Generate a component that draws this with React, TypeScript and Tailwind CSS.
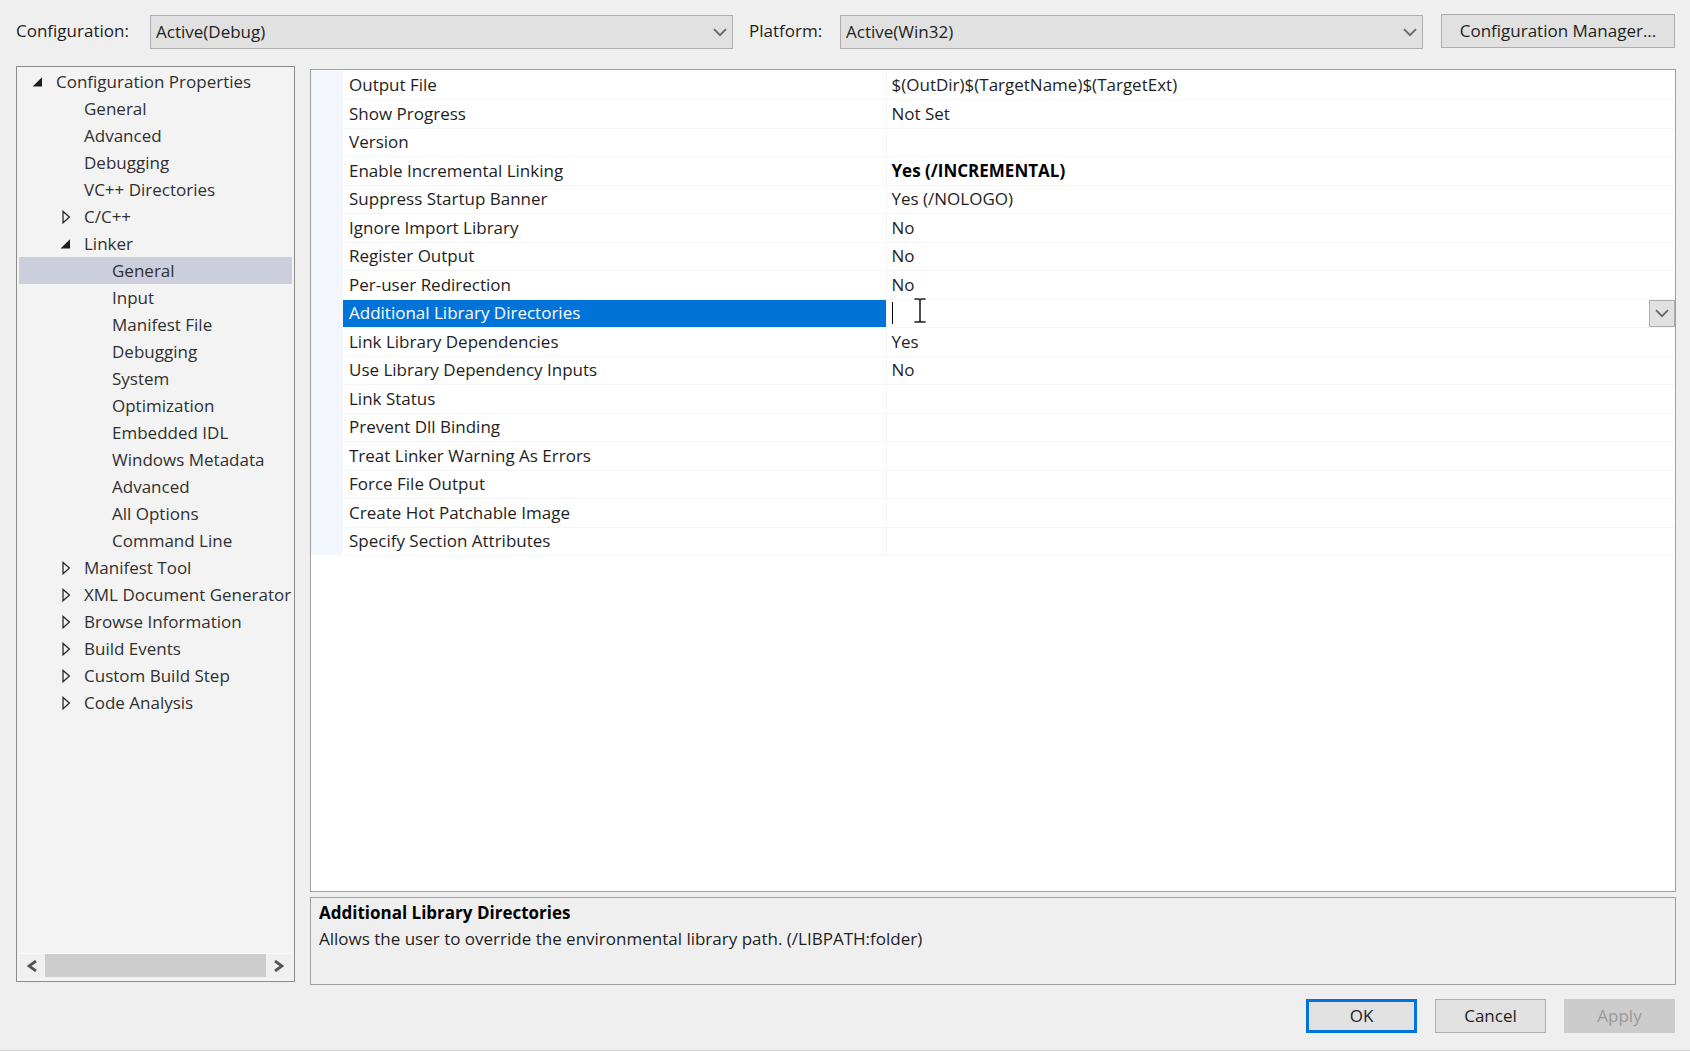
import { useState } from 'react'
import { clsx } from 'clsx'

type TreeNode = {
  id: string
  label: string
  level: 0 | 1 | 2
  state?: 'open' | 'closed'
}

const TREE: TreeNode[] = [
  { id: 'root', label: 'Configuration Properties', level: 0, state: 'open' },
  { id: 'general', label: 'General', level: 1 },
  { id: 'advanced', label: 'Advanced', level: 1 },
  { id: 'debugging', label: 'Debugging', level: 1 },
  { id: 'vc-directories', label: 'VC++ Directories', level: 1 },
  { id: 'cpp', label: 'C/C++', level: 1, state: 'closed' },
  { id: 'linker', label: 'Linker', level: 1, state: 'open' },
  { id: 'linker-general', label: 'General', level: 2 },
  { id: 'linker-input', label: 'Input', level: 2 },
  { id: 'linker-manifest', label: 'Manifest File', level: 2 },
  { id: 'linker-debugging', label: 'Debugging', level: 2 },
  { id: 'linker-system', label: 'System', level: 2 },
  { id: 'linker-optimization', label: 'Optimization', level: 2 },
  { id: 'linker-idl', label: 'Embedded IDL', level: 2 },
  { id: 'linker-metadata', label: 'Windows Metadata', level: 2 },
  { id: 'linker-advanced', label: 'Advanced', level: 2 },
  { id: 'linker-all', label: 'All Options', level: 2 },
  { id: 'linker-cmd', label: 'Command Line', level: 2 },
  { id: 'manifest-tool', label: 'Manifest Tool', level: 1, state: 'closed' },
  { id: 'xml-doc', label: 'XML Document Generator', level: 1, state: 'closed' },
  { id: 'browse-info', label: 'Browse Information', level: 1, state: 'closed' },
  { id: 'build-events', label: 'Build Events', level: 1, state: 'closed' },
  { id: 'custom-build', label: 'Custom Build Step', level: 1, state: 'closed' },
  { id: 'code-analysis', label: 'Code Analysis', level: 1, state: 'closed' },
]

const INDENT = {
  0: 'pl-[9px]',
  1: 'pl-[37px]',
  2: 'pl-[65px]',
}

const PROPERTIES = [
  { name: 'Output File', value: '$(OutDir)$(TargetName)$(TargetExt)' },
  { name: 'Show Progress', value: 'Not Set' },
  { name: 'Version', value: '' },
  { name: 'Enable Incremental Linking', value: 'Yes (/INCREMENTAL)', changed: true },
  { name: 'Suppress Startup Banner', value: 'Yes (/NOLOGO)' },
  { name: 'Ignore Import Library', value: 'No' },
  { name: 'Register Output', value: 'No' },
  { name: 'Per-user Redirection', value: 'No' },
  { name: 'Additional Library Directories', value: '', editing: true },
  { name: 'Link Library Dependencies', value: 'Yes' },
  { name: 'Use Library Dependency Inputs', value: 'No' },
  { name: 'Link Status', value: '' },
  { name: 'Prevent Dll Binding', value: '' },
  { name: 'Treat Linker Warning As Errors', value: '' },
  { name: 'Force File Output', value: '' },
  { name: 'Create Hot Patchable Image', value: '' },
  { name: 'Specify Section Attributes', value: '' },
]

function Chevron({ className }: { className?: string }) {
  return (
    <svg viewBox="0 0 14 9" className={clsx('w-[14px] h-[9px]', className)} fill="none" aria-hidden>
      <path d="M1 1.2 L7 7.2 L13 1.2" stroke="#666666" strokeWidth="1.7" />
    </svg>
  )
}

function Expander({ state }: { state?: 'open' | 'closed' }) {
  return (
    <span className="w-7 shrink-0 pl-1">
      {state === 'open' && (
        <svg viewBox="0 0 12 12" className="w-3 h-3" aria-hidden>
          <path d="M10 1.2 V10.5 H0.6 Z" fill="#1e1e1e" />
        </svg>
      )}
      {state === 'closed' && (
        <svg viewBox="0 0 12 14" className="w-3 h-3.5" fill="none" aria-hidden>
          <path d="M3 1.4 V12.8 L9.4 7.1 Z" stroke="#2a2a2a" strokeWidth="1.3" />
        </svg>
      )}
    </span>
  )
}

function ComboBox({ id, options }: { id: string; options: string[] }) {
  return (
    <div className="relative min-w-0 flex-1 pt-px">
      <select
        id={id}
        className="block w-full h-[34px] appearance-none border border-[#adadad] bg-[#e1e1e1] pl-[5px] pr-8 text-[#1e1e1e] outline-none"
      >
        {options.map((option) => (
          <option key={option}>{option}</option>
        ))}
      </select>
      <Chevron className="absolute right-[6px] top-[14px] pointer-events-none" />
    </div>
  )
}

function ScrollArrow({ direction }: { direction: 'left' | 'right' }) {
  return (
    <button
      type="button"
      aria-label={`Scroll ${direction}`}
      className="flex w-[26px] shrink-0 items-center justify-center"
    >
      <svg viewBox="0 0 10 12" className="w-[10px] h-3" fill="none" aria-hidden>
        <path
          d={direction === 'left' ? 'M9 1 L2 6 L9 11' : 'M1 1 L8 6 L1 11'}
          stroke="#555555"
          strokeWidth="2.8"
        />
      </svg>
    </button>
  )
}

function PropertyTree() {
  const [selectedId, setSelectedId] = useState('linker-general')

  return (
    <nav
      aria-label="Configuration Properties"
      className="flex w-[279px] shrink-0 flex-col border border-[#8c8c8c] bg-[#f3f3f3] px-[2px] pt-px pb-[3px]"
    >
      <ul className="flex-1">
        {TREE.map((node) => (
          <li key={node.id}>
            <button
              type="button"
              onClick={() => setSelectedId(node.id)}
              aria-expanded={node.state ? node.state === 'open' : undefined}
              className={clsx(
                'flex h-[27px] w-full items-center whitespace-nowrap text-left text-[#303030]',
                INDENT[node.level],
                selectedId === node.id && 'bg-[#cccedb]'
              )}
            >
              <Expander state={node.state} />
              {node.label}
            </button>
          </li>
        ))}
      </ul>
      <div className="flex h-[25px] border-t border-[#fafafa] bg-[#f0f0f0]">
        <ScrollArrow direction="left" />
        <div className="h-[23px] flex-1 bg-[#cdcdcd]" />
        <ScrollArrow direction="right" />
      </div>
    </nav>
  )
}

function DirectoryEditor() {
  return (
    <div className="relative flex h-[27px] items-center">
      <input
        type="text"
        aria-label="Additional Library Directories"
        className="h-full min-w-0 flex-1 bg-transparent pl-[5px] outline-none"
      />
      <button
        type="button"
        aria-label="Edit value"
        className="flex h-[27px] w-[26px] items-center justify-center border border-[#adadad] bg-[#e1e1e1]"
      >
        <Chevron />
      </button>
      {/* text caret and mouse pointer */}
      <span className="absolute left-[5px] top-[2px] h-[22px] w-px bg-black" />
      <svg
        viewBox="0 0 12 25"
        className="absolute left-[27px] -top-[2px] h-[25px] w-3"
        fill="none"
        aria-hidden
      >
        <path
          d="M0.5 1 H4 Q6 1 6 2.5 Q6 1 8 1 H11.5 M6 2 V23 M0.5 24 H4 Q6 24 6 22.5 Q6 24 8 24 H11.5"
          stroke="#222222"
          strokeWidth="1.6"
        />
      </svg>
    </div>
  )
}

function PropertyGrid() {
  return (
    <div className="flex-1 border border-[#a0a0a0] bg-white pt-px">
      <table className="w-full table-fixed border-collapse">
        <colgroup>
          <col className="w-8" />
          <col className="w-[543px]" />
          <col />
        </colgroup>
        <tbody>
          {PROPERTIES.map((property) => (
            <tr key={property.name} className="h-[28px] even:h-[29px]">
              <td className="bg-[#f3f6fd] p-0" />
              <th
                scope="row"
                className={clsx(
                  'border-b border-r border-[#f3f5f9] py-0 pl-[6px] text-left font-normal',
                  property.editing ? 'bg-[#0073d9] text-white' : 'text-[#1e1e1e]'
                )}
              >
                {property.name}
              </th>
              <td
                className={clsx(
                  'border-b border-[#f3f5f9] py-0',
                  !property.editing && 'pl-[5px]',
                  property.changed ? 'font-bold text-black' : 'text-[#1e1e1e]'
                )}
              >
                {property.editing ? <DirectoryEditor /> : property.value}
              </td>
            </tr>
          ))}
        </tbody>
      </table>
    </div>
  )
}

export default function App() {
  return (
    <div className="flex min-h-screen flex-col border-b border-[#cfcfcf] bg-[#efefef] pl-4 pr-[14px] pt-[14px] font-['Open_Sans','Noto_Sans',sans-serif] text-[17px] leading-[26px] text-[#1e1e1e]">
      <header className="flex items-start">
        <label htmlFor="configuration" className="w-[134px] shrink-0 pt-1">
          Configuration:
        </label>
        <ComboBox id="configuration" options={['Active(Debug)', 'Debug', 'Release']} />
        <label htmlFor="platform" className="ml-4 w-[91px] shrink-0 pt-1">
          Platform:
        </label>
        <ComboBox id="platform" options={['Active(Win32)', 'Win32', 'x64']} />
        <button
          type="button"
          className="ml-[18px] mr-px h-[34px] w-[234px] shrink-0 border border-[#adadad] bg-[#e1e1e1]"
        >
          Configuration Manager...
        </button>
      </header>

      <main className="mt-[17px] flex flex-1 gap-[15px]">
        <div className="flex pb-[3px]">
          <PropertyTree />
        </div>
        <div className="flex min-w-0 flex-1 flex-col gap-[5px] pt-[3px]">
          <PropertyGrid />
          <section className="h-[88px] border border-[#a0a0a0] px-2 pt-[2px]">
            <h2 className="font-bold text-black">Additional Library Directories</h2>
            <p>Allows the user to override the environmental library path. (/LIBPATH:folder)</p>
          </section>
        </div>
      </main>

      <footer className="mb-[17px] mr-px mt-[14px] flex justify-end gap-[18px]">
        <button type="button" className="h-[34px] w-[111px] border-[3px] border-[#0073d9] bg-[#e1e1e1]">
          OK
        </button>
        <button type="button" className="h-[34px] w-[111px] border border-[#adadad] bg-[#e1e1e1]">
          Cancel
        </button>
        <button type="button" disabled className="h-[34px] w-[111px] bg-[#cccccc] text-[#9a9a9a]">
          Apply
        </button>
      </footer>
    </div>
  )
}
